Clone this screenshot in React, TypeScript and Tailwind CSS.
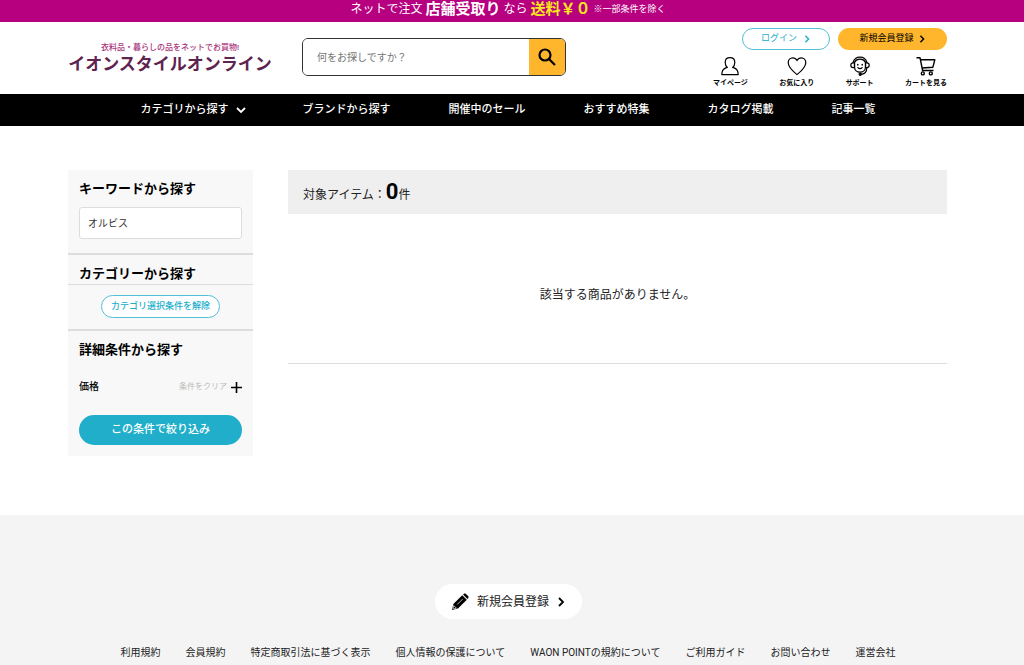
import type { ReactNode } from "react";

const navItems = ["ブランドから探す", "開催中のセール", "おすすめ特集", "カタログ掲載", "記事一覧"];

const footerLinks = [
  "利用規約",
  "会員規約",
  "特定商取引法に基づく表示",
  "個人情報の保護について",
  "WAON POINTの規約について",
  "ご利用ガイド",
  "お問い合わせ",
  "運営会社",
];

const Chevron = ({ className }: { className: string }) => (
  <svg viewBox="0 0 8 10" fill="none" stroke="currentColor" strokeWidth="1.8" className={className} aria-hidden="true">
    <path d="M2 1l4 4-4 4" />
  </svg>
);

const UserIcon = () => (
  <svg width="20" height="20" viewBox="0 0 20 20" fill="none" stroke="currentColor" strokeWidth="1.2" strokeLinejoin="round">
    <path d="M7.4 11.400C5.900 10.400 5.200 8.400 5.200 6.400c0-3 1.900-4.800 4.800-4.800s4.800 1.800 4.800 4.800c0 2-.7 4-2.200 5 3.200.7 5 2.300 5.400 5.300l.2 1.900H1.800l.2-1.900c.4-3 2.200-4.600 5.400-5.300z" />
  </svg>
);

const HeartIcon = () => (
  <svg width="20" height="20" viewBox="0 0 20 20" fill="none" stroke="currentColor" strokeWidth="1.2" strokeLinejoin="round">
    <path d="M10 18.600C6.500 15.800 1.200 11.700 1.200 6.800c0-2.800 2-5 4.500-5 1.800 0 3.400 1 4.300 2.800.9-1.800 2.500-2.800 4.300-2.800 2.500 0 4.500 2.200 4.500 5 0 4.900-5.300 9-8.800 11.800z" />
  </svg>
);

const SupportIcon = () => (
  <svg width="20" height="20" viewBox="0 0 20 20" fill="none" stroke="currentColor" strokeWidth="1.2" strokeLinecap="round">
    <path d="M3 6.400C4 3.200 6.500 1.200 10 1.200s6 2 7 5.200" />
    <path d="M4.600 6.200C5.600 4.400 7.500 3.200 10 3.200s4.400 1.200 5.400 3" />
    <path d="M4.600 6.200v5c0 3 2.400 5 5.400 5s5.400-2 5.400-5v-5" />
    <path d="M4.400 6.800H3.200C1.800 6.800.8 7.800.8 9.200s1 2.400 2.400 2.400h1.200zM15.600 6.800h1.200c1.400 0 2.400 1 2.400 2.400s-1 2.400-2.400 2.400h-1.200z" />
    <path d="M16.800 12c0 3.600-2 5.800-5.300 6.400M7.800 11.600c1.200 1.300 3.200 1.300 4.400 0" />
    <path d="M7.800 8.400v.6M12.200 8.400v.6" strokeWidth="1.500" />
    <circle cx="10.200" cy="18.300" r="1.100" fill="currentColor" />
  </svg>
);

const CartIcon = () => (
  <svg width="20" height="20" viewBox="0 0 20 20" fill="none" stroke="currentColor" strokeWidth="1.400" strokeLinejoin="round">
    <path d="M.5 1.700h3.500l2.600 12.800h10.900M4.500 3.800h14.300l-1.900 7.400-10.800.8" />
    <circle cx="6.800" cy="17.400" r="1.500" />
    <circle cx="14.800" cy="17.400" r="1.500" />
  </svg>
);

const PencilIcon = () => (
  <svg width="18" height="18" viewBox="0 0 18 18" aria-hidden="true">
    <path d="M1 17l1.400-6L11.200 2.200l4.600 4.600L7 15.600z" />
    <path d="M12 1.500l.7-.6c.7-.6 1.600-.6 2.200 0l2.200 2.200c.6.6.6 1.500 0 2.200l-.6.7z" />
    <path d="M2.800 12.600l2.600 2.600-2.500.8-.9-.9zM6.300 11.400l5.500-5.500" fill="none" stroke="#fff" strokeWidth=".7" />
  </svg>
);

const HeaderLink = ({ icon, label }: { icon: ReactNode; label: string }) => (
  <a href="#" className="flex flex-col items-center text-black">
    {icon}
    <span className="mt-0.5 text-[7px] leading-[10px] font-bold">{label}</span>
  </a>
);

const Header = () => {
  return (
    <header>
      <p className="flex h-[22px] items-start justify-center gap-[3px] bg-[#b7007f] pr-2 text-xs leading-[18px] text-white">
        <span>ネットで注文</span>
        <strong className="text-[15px] leading-[18px]">店舗受取り</strong>
        <span>なら</span>
        <strong className="text-[15px] leading-[18px] text-[#f8e71c]">送料￥０</strong>
        <span className="text-[9px] leading-[18px]">※一部条件を除く</span>
      </p>
      <div className="flex h-[72px] items-start justify-between pr-[77px] pl-[68px]">
        <div className="flex">
          <a href="#" className="mt-5 flex w-[204px] flex-col items-center whitespace-nowrap">
            <span className="text-[8px] leading-3 font-medium text-[#a8337c]">
              衣料品・暮らしの品をネットでお買物!
            </span>
            <span className="text-[17px] leading-5 font-bold text-[#5f2350]">イオンスタイルオンライン</span>
          </a>
          <form className="mt-4 ml-[30px] flex h-[38px] w-[264px] overflow-hidden rounded-md border border-[#333]">
            <input
              type="text"
              aria-label="商品検索"
              placeholder="何をお探しですか？"
              className="min-w-0 flex-1 bg-white pl-3.5 text-[10px] outline-none placeholder:text-[#757575]"
            />
            <button type="button" aria-label="検索" className="flex w-9 items-center justify-center bg-[#ffb62d]">
              <svg width="18" height="18" viewBox="0 0 18 18" fill="none" stroke="#000" strokeWidth="2.200">
                <circle cx="7" cy="7" r="5.500" />
                <path d="M11 11l6 6" />
              </svg>
            </button>
          </form>
        </div>
        <div className="mt-1.5 w-[234px]">
          <div className="flex justify-end gap-2 text-[9px]">
            <a
              href="#"
              className="flex h-[22px] w-[88px] items-center justify-center gap-1.5 rounded-full border border-[#52bfd6] text-[#21aecb]"
            >
              ログイン
              <Chevron className="h-2 w-2" />
            </a>
            <a href="#" className="flex h-[22px] w-[109px] items-center justify-center gap-1 rounded-full bg-[#ffb62d] text-black">
              新規会員登録
              <Chevron className="h-2 w-2" />
            </a>
          </div>
          <div className="mt-1.5 flex justify-between">
            <HeaderLink icon={<UserIcon />} label="マイページ" />
            <HeaderLink icon={<HeartIcon />} label="お気に入り" />
            <HeaderLink icon={<SupportIcon />} label="サポート" />
            <HeaderLink icon={<CartIcon />} label="カートを見る" />
          </div>
        </div>
      </div>
      <nav className="flex h-8 items-center justify-center gap-[58px] bg-black pr-2 text-[11px] font-medium whitespace-nowrap text-white">
        <a href="#" className="flex items-center gap-2">
          カテゴリから探す
          <Chevron className="h-2.5 w-2 rotate-90" />
        </a>
        {navItems.map((item) => (
          <a key={item} href="#">
            {item}
          </a>
        ))}
      </nav>
    </header>
  );
};

const Sidebar = () => {
  return (
    <aside className="w-[185px] shrink-0 bg-[#f8f8f8] text-black">
      <form>
        <div className="px-[11px] pt-2.5 pb-3.5">
          <label htmlFor="keyword" className="block text-[13px] leading-[18px] font-bold">
            キーワードから探す
          </label>
          <input
            id="keyword"
            type="text"
            defaultValue="オルビス"
            className="mt-[9px] block h-8 w-full rounded-[3px] border border-[#ddd] bg-white px-2 pb-0.5 text-[10px] text-[#333] outline-none"
          />
        </div>
        <div className="border-t-2 border-[#ddd]">
          <h2 className="border-b border-[#ddd] px-[11px] pt-2.5 pb-px text-[13px] leading-[18px] font-bold">
            カテゴリーから探す
          </h2>
          <div className="flex justify-center pt-2.5 pb-[11px]">
            <button
              type="button"
              className="h-[23px] w-[119px] rounded-full border border-[#52bfd6] bg-white text-[9px] font-medium text-[#21aecb]"
            >
              カテゴリ選択条件を解除
            </button>
          </div>
        </div>
        <div className="border-t-2 border-[#ddd] px-[11px] pt-2.5 pb-[11px]">
          <h2 className="text-[13px] leading-[18px] font-bold">詳細条件から探す</h2>
          <div className="mt-5 flex items-center text-[10px] leading-4">
            <span className="font-medium">価格</span>
            <button type="button" className="ml-auto text-[8px] text-[#bbb]">
              条件をクリア
            </button>
            <button type="button" aria-label="価格を開く" className="ml-1">
              <svg width="11" height="11" viewBox="0 0 11 11" stroke="#000" strokeWidth="1.600">
                <path d="M5.500 0v11M0 5.500h11" />
              </svg>
            </button>
          </div>
          <button
            type="button"
            className="mt-5 h-[30px] w-full rounded-full bg-[#20aeca] text-[11px] font-medium text-white"
          >
            この条件で絞り込み
          </button>
        </div>
      </form>
    </aside>
  );
};

const Footer = () => {
  return (
    <footer className="mt-[59px] bg-[#f4f4f4] pt-[69px] pb-10">
      <div className="flex justify-center pr-2">
        <a
          href="#"
          className="flex h-[35px] w-[147px] items-center justify-center gap-2 rounded-full bg-white text-xs text-[#222]"
        >
          <PencilIcon />
          新規会員登録
          <Chevron className="h-3 w-2 text-black" />
        </a>
      </div>
      <ul className="mt-[26px] flex justify-center gap-[25px] pr-2 text-[10px] leading-4 whitespace-nowrap text-[#222]">
        {footerLinks.map((link) => (
          <li key={link}>
            <a href="#">{link}</a>
          </li>
        ))}
      </ul>
    </footer>
  );
};

const App = () => {
  return (
    <div lang="ja" className="min-h-screen bg-white font-[Roboto,'Noto_Sans_CJK_JP',sans-serif] text-[#222]">
      <Header />
      <div className="flex items-start gap-[35px] pt-11 pr-[77px] pl-[68px]">
        <Sidebar />
        <main className="min-w-0 flex-1">
          <p className="flex h-11 items-baseline bg-[#efefef] pt-1.5 pl-[15px] text-xs">
            対象アイテム：
            <strong className="text-[22px] leading-8 text-black">0</strong>件
          </p>
          <p className="border-b border-[#ddd] pt-[73px] pb-[60px] text-center text-xs leading-4">
            該当する商品がありません。
          </p>
        </main>
      </div>
      <Footer />
    </div>
  );
};

export default App;
